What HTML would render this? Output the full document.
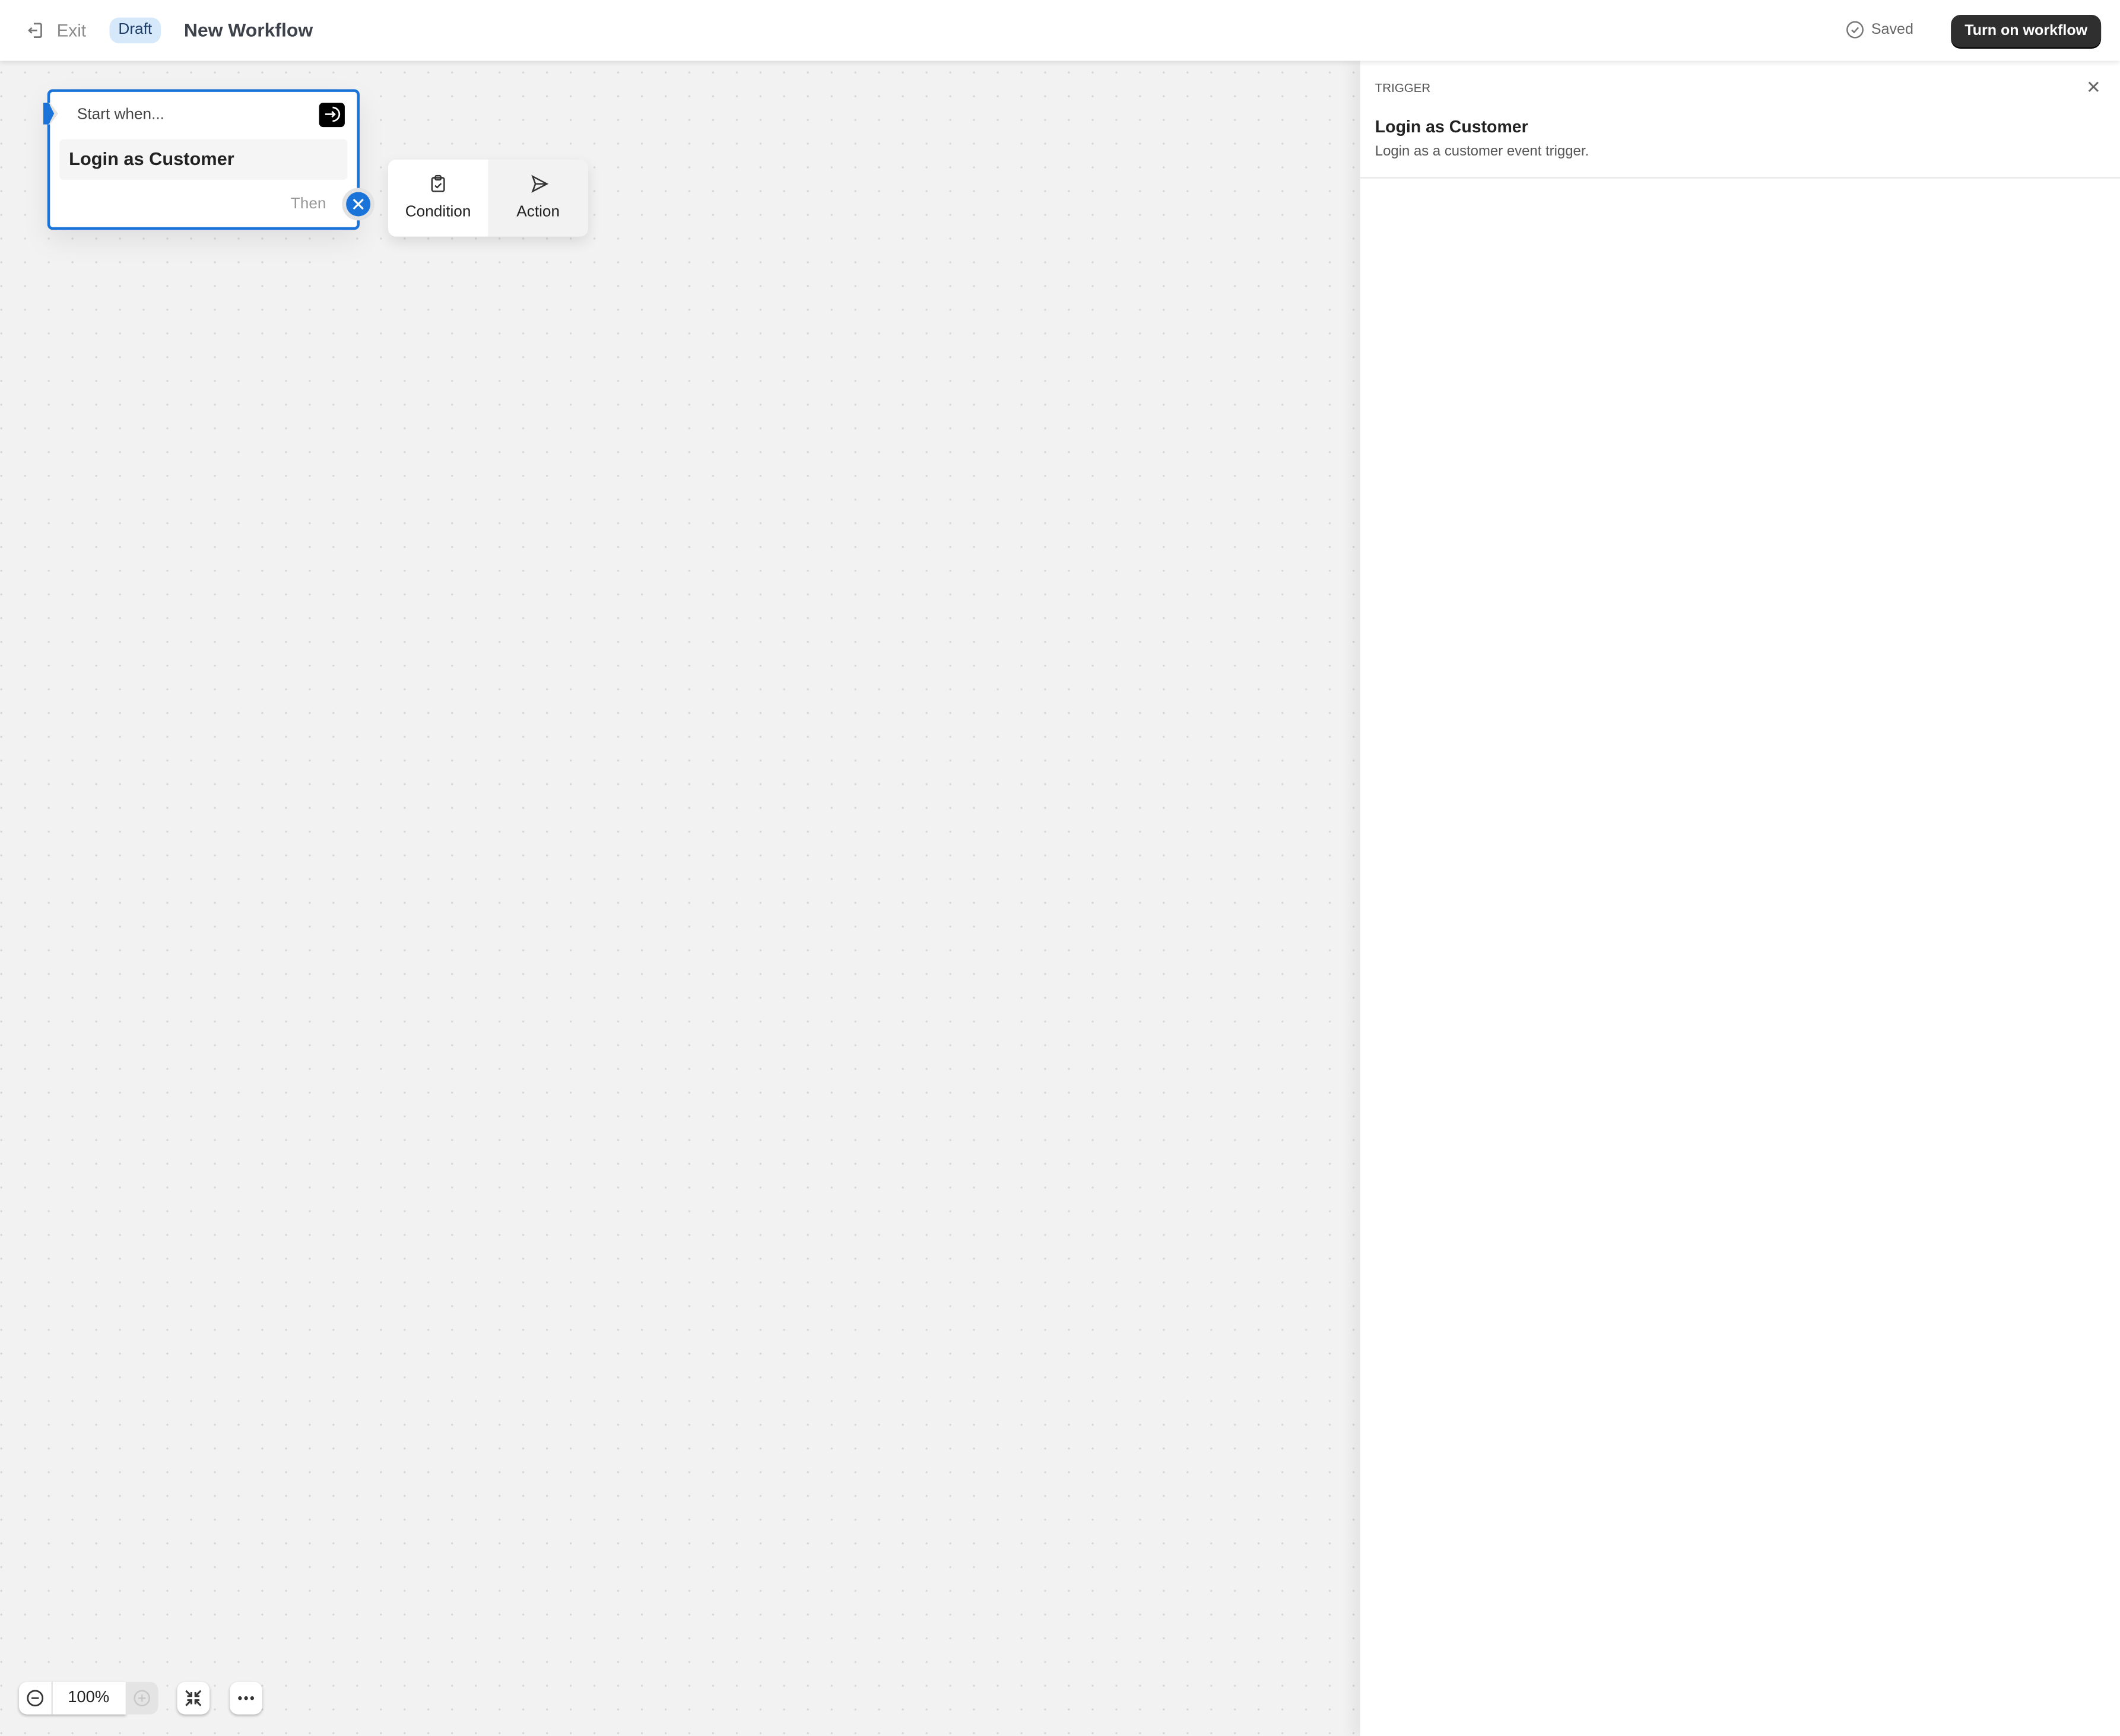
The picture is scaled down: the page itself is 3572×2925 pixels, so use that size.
<!DOCTYPE html>
<html><head><meta charset="utf-8"><style>
html,body{margin:0;padding:0;width:3572px;height:2924px;overflow:hidden;background:#f2f2f2;}
#w{position:absolute;left:0;top:0;width:1568px;height:1284px;transform:scale(2.27806);transform-origin:0 0;font-family:"Liberation Sans",sans-serif;background-color:#f2f2f2;background-image:radial-gradient(circle,#d6d6d6 0.6px,transparent 0.9px);background-size:17.56px 17.56px;background-position:-7.8px -7.8px;overflow:hidden;}
.a{position:absolute;}
#top{left:0;top:0;width:1568px;height:45px;background:#fff;box-shadow:0 1px 4px rgba(0,0,0,.12);z-index:5;}
#panel{left:1006px;top:45px;width:562px;height:1240px;background:#fff;box-shadow:-6px 0 10px rgba(0,0,0,.06);}
.btn{background:#fff;border-radius:6px;box-shadow:0 1px 2px rgba(0,0,0,.25);}
</style></head><body><div id="w">
<div id="top" class="a">
 <svg class="a" style="left:20px;top:16px" width="13" height="13" viewBox="0 0 13 13" fill="none" stroke="#777" stroke-width="1.2"><path d="M5 1.5h4.5a1 1 0 0 1 1 1v8a1 1 0 0 1-1 1H5"/><path d="M7.5 6.5H1.5M3.5 4.5l-2 2 2 2"/></svg>
 <div class="a" style="left:42px;top:15px;font-size:13px;color:#8a8a8a">Exit</div>
 <div class="a" style="left:81px;top:13px;width:38px;height:19px;border-radius:7px;background:#d6e9fb;color:#1f3f66;font-size:11.5px;line-height:19px;text-align:center">Draft</div>
 <div class="a" style="left:136px;top:14px;font-size:14px;font-weight:bold;color:#3c414a">New Workflow</div>
 <svg class="a" style="left:1365px;top:15px" width="14" height="14" viewBox="0 0 14 14" fill="none" stroke="#777" stroke-width="1.1"><circle cx="7" cy="7" r="5.8"/><path d="M4.6 7.2l1.7 1.7 3.2-3.6"/></svg>
 <div class="a" style="left:1384px;top:16px;font-size:11px;color:#666">Saved</div>
 <div class="a" style="left:1443px;top:11px;width:111px;height:24px;border-radius:7px;background:#2f2f2f;box-shadow:0 1px 0 #000;color:#fff;font-size:11px;font-weight:bold;line-height:24px;text-align:center">Turn on workflow</div>
</div>
<div id="panel" class="a">
 <div class="a" style="left:11px;top:15px;font-size:9px;color:#555">TRIGGER</div>
 <div class="a" style="left:537px;top:12px;font-size:13px;color:#666">✕</div>
 <div class="a" style="left:11px;top:42px;font-size:12.5px;font-weight:bold;color:#222">Login as Customer</div>
 <div class="a" style="left:11px;top:61px;font-size:10.5px;color:#555">Login as a customer event trigger.</div>
 <div class="a" style="left:0;top:86px;width:562px;height:1px;background:#e6e6e6"></div>
</div>
<div class="a" style="left:35px;top:66px;width:227px;height:100px;border:2px solid #1a73d9;border-radius:4px;background:#fff;box-shadow:0 8px 20px rgba(0,0,0,.08)">
 <div class="a" style="left:20px;top:11px;font-size:11.5px;color:#444">Start when...</div>
 <div class="a" style="left:199px;top:8px;width:19px;height:18px;border-radius:3px;background:#000"></div>
 <svg class="a" style="left:201px;top:9px" width="15" height="15" viewBox="0 0 15 15" fill="none" stroke="#fff" stroke-width="1.2"><path d="M8 2.5a5 5 0 0 1 0 10"/><path d="M2.5 7.5h7M7.5 5.5l2 2-2 2"/></svg>
 <div class="a" style="left:7px;top:35px;width:213px;height:30px;background:#f5f5f5;border-radius:3px"></div>
 <div class="a" style="left:14px;top:42px;font-size:13.5px;font-weight:bold;color:#222">Login as Customer</div>
 <div class="a" style="left:178px;top:77px;font-size:11.5px;color:#999">Then</div>
</div>
<svg class="a" style="left:29px;top:74px" width="20" height="20" viewBox="0 0 20 20"><path d="M3 2h5l6 8-6 8H3z" fill="#e6e2e2"/><path d="M3 2h3a2 2 0 0 1 2 2l3 6-3 6a2 2 0 0 1-2 2H3z" fill="#1a73d9"/></svg>
<div class="a" style="left:253px;top:139px;width:24px;height:24px;border-radius:12px;background:#e2e2e2"></div>
<div class="a" style="left:256px;top:142px;width:18px;height:18px;border-radius:9px;background:#1a73d9"></div>
<svg class="a" style="left:256px;top:142px" width="18" height="18" viewBox="0 0 18 18" stroke="#fff" stroke-width="1.4"><path d="M5.5 5.5l7 7M12.5 5.5l-7 7"/></svg>
<div class="a" style="left:287px;top:118px;width:148px;height:57px;border-radius:6px;background:#f2f2f2;box-shadow:0 4px 10px rgba(0,0,0,.1);overflow:hidden">
 <div class="a" style="left:0;top:0;width:74px;height:57px;background:#fff"></div>
 <svg class="a" style="left:31px;top:11px" width="12" height="14" viewBox="0 0 12 14" fill="none" stroke="#333" stroke-width="1.1"><rect x="1.5" y="2.5" width="9" height="10" rx="1.2"/><rect x="4" y="1" width="4" height="3" rx=".8"/><path d="M3.8 8.2l1.5 1.5 3-3"/></svg>
 <div class="a" style="left:0;top:33px;width:74px;text-align:center;font-size:11.5px;color:#222">Condition</div>
 <svg class="a" style="left:105px;top:11px" width="14" height="14" viewBox="0 0 14 14" fill="none" stroke="#333" stroke-width="1.1"><path d="M2 1.5l10.5 5.5L2 12.5 4 7z"/><path d="M4 7h8"/></svg>
 <div class="a" style="left:74px;top:33px;width:74px;text-align:center;font-size:11.5px;color:#222">Action</div>
</div>
<div class="a btn" style="left:14px;top:1244px;width:79px;height:24px;border-radius:6px 0 0 6px"></div>
<div class="a" style="left:93px;top:1244px;width:24px;height:24px;background:#e4e4e4;border-radius:0 6px 6px 0"></div>
<div class="a" style="left:38px;top:1244px;width:1px;height:24px;background:#e0e0e0"></div>
<svg class="a" style="left:19px;top:1249px" width="14" height="14" viewBox="0 0 14 14" fill="none" stroke="#333" stroke-width="1.2"><circle cx="7" cy="7" r="5.5"/><path d="M4.3 7h5.4"/></svg>
<div class="a" style="left:38px;top:1248px;width:55px;text-align:center;font-size:12px;color:#222">100%</div>
<svg class="a" style="left:98px;top:1249px" width="14" height="14" viewBox="0 0 14 14" fill="none" stroke="#c8c8c8" stroke-width="1.1"><circle cx="7" cy="7" r="5.5"/><path d="M4.3 7h5.4M7 4.3v5.4"/></svg>
<div class="a btn" style="left:131px;top:1244px;width:24px;height:24px"></div>
<svg class="a" style="left:136px;top:1249px" width="14" height="14" viewBox="0 0 14 14" fill="none" stroke="#333" stroke-width="1.3"><path d="M1.5 1.5l4 4M5.5 2.5v3h-3M12.5 1.5l-4 4M8.5 2.5v3h3M1.5 12.5l4-4M2.5 8.5h3v3M12.5 12.5l-4-4M11.5 8.5h-3v3"/></svg>
<div class="a btn" style="left:170px;top:1244px;width:24px;height:24px"></div>
<svg class="a" style="left:170px;top:1244px" width="24" height="24"><circle cx="7.5" cy="12" r="1.4" fill="#333"/><circle cx="12" cy="12" r="1.4" fill="#333"/><circle cx="16.5" cy="12" r="1.4" fill="#333"/></svg>
</div></body></html>
